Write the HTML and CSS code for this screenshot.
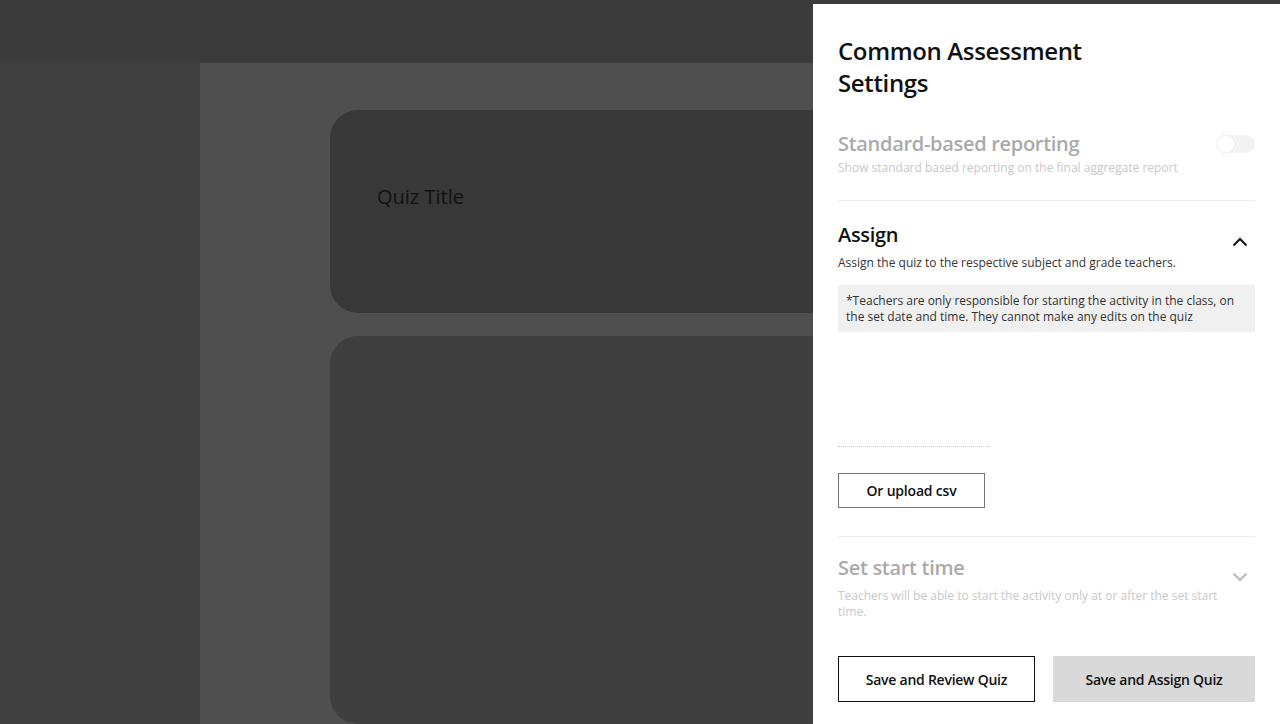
FILE: index.html
```html
<!DOCTYPE html>
<html lang="en">
<head>
    <meta charset="UTF-8">
    <meta name="viewport" content="width=device-width, initial-scale=1.0">
    <title>Common Assessment Settings</title>
    <link rel="stylesheet" href="styles.css">
</head>
<body>
    <div class="topbar"></div>
    <div class="layout">
        <div class="sidebar"></div>
        <div class="main">
            <div class="card card-title">
                <div class="quiz-title">Quiz Title</div>
            </div>
            <div class="card card-body"></div>
        </div>
    </div>

    <div class="drawer">
        <h1 class="drawer-title">Common Assessment Settings</h1>

        <div class="section section-disabled first">
            <div class="section-head">
                <div class="section-name">Standard-based reporting</div>
                <div class="toggle"><span class="knob"></span></div>
            </div>
            <div class="section-desc">Show standard based reporting on the final aggregate report</div>
        </div>

        <div class="section">
            <div class="section-head">
                <div class="section-name">Assign</div>
                <svg class="chevron" width="16" height="10" viewBox="0 0 16 10">
                    <path d="M1.5 8.5 L8 2 L14.5 8.5" fill="none" stroke="#111" stroke-width="2"/>
                </svg>
            </div>
            <div class="section-desc">Assign the quiz to the respective subject and grade teachers.</div>
            <div class="note">*Teachers are only responsible for starting the activity in the class, on the set date and time. They cannot make any edits on the quiz</div>
            <div class="picker"></div>
            <button class="upload-btn">Or upload csv</button>
        </div>

        <div class="section section-disabled last">
            <div class="section-head">
                <div class="section-name">Set start time</div>
                <svg class="chevron down" width="16" height="10" viewBox="0 0 16 10">
                    <path d="M1.5 1.5 L8 8 L14.5 1.5" fill="none" stroke="#bbb" stroke-width="2"/>
                </svg>
            </div>
            <div class="section-desc narrow">Teachers will be able to start the activity only at or after the set start time.</div>
        </div>

        <div class="actions">
            <button class="btn btn-outline">Save and Review Quiz</button>
            <button class="btn btn-fill">Save and Assign Quiz</button>
        </div>
    </div>
</body>
</html>
```

FILE: styles.css
```css
body {
    font-family: 'Open Sans', 'Noto Sans', sans-serif;
    margin: 0;
    padding: 0;
    background-color: #4f4f4f;
    height: 724px;
    overflow: hidden;
}
.topbar {
    height: 63px;
    background: #3b3b3b;
}
.layout {
    display: flex;
    height: 661px;
}
.sidebar {
    width: 200px;
    background: #404040;
}
.main {
    flex: 1;
    padding: 47px 0 0 130px;
    display: flex;
    flex-direction: column;
    gap: 23px;
}
.card {
    border-radius: 28px 0 0 28px;
}
.card-title {
    height: 203px;
    background: #383838;
    padding: 0 0 30px 47px;
    display: flex;
    align-items: center;
    box-sizing: border-box;
}
.quiz-title {
    font-size: 20px;
    color: #121212;
}
.card-body {
    flex: 1;
    background: #3f3f3f;
}

/* drawer sits over the page */
.drawer {
    position: fixed;
    top: 4px;
    right: 0;
    bottom: 0;
    width: 467px;
    background: #fff;
    box-sizing: border-box;
    padding: 31px 25px 0 25px;
    display: flex;
    flex-direction: column;
}
.drawer-title {
    margin: 0;
    font-size: 24px;
    line-height: 32px;
    font-weight: 600;
    letter-spacing: -0.35px;
    color: #111;
    width: 260px;
}
.section {
    border-bottom: 1px solid #ececec;
    padding: 20px 0 28px;
}
.section.first {
    padding-top: 31px;
    padding-bottom: 24px;
}
.section.last {
    border-bottom: none;
    padding-top: 17px;
    padding-bottom: 0;
}
.section-head {
    display: flex;
    justify-content: space-between;
    align-items: flex-start;
}
.section-name {
    font-size: 20px;
    line-height: 28px;
    font-weight: 600;
    letter-spacing: -0.3px;
    color: #111;
}
.section-desc {
    font-size: 12px;
    line-height: 16px;
    color: #333;
    margin-top: 6px;
}
.section-disabled .section-name {
    color: #aaa;
}
.section-disabled .section-desc {
    color: #c8c8c8;
    margin-top: 2px;
}
.section-desc.narrow {
    max-width: 385px;
    margin-top: 6px;
}
.chevron {
    margin-right: 7px;
    margin-top: 16px;
}
.chevron.down {
    margin-top: 18px;
}
.toggle {
    width: 38px;
    height: 18px;
    border-radius: 9px;
    background: #f3f3f3;
    position: relative;
    margin-top: 5px;
}
.knob {
    position: absolute;
    left: 0;
    top: 0;
    width: 18px;
    height: 18px;
    border-radius: 50%;
    background: #fff;
    box-shadow: 0 0 1px rgba(0, 0, 0, 0.25);
}
.note {
    margin-top: 14px;
    background: #f0f0f0;
    padding: 8px 8px 7px;
    font-size: 12px;
    line-height: 16px;
    color: #333;
}
.picker {
    width: 152px;
    height: 114px;
    border-bottom: 1px dotted #c8c8c8;
}
.upload-btn {
    margin-top: 26px;
    width: 147px;
    height: 35px;
    border: 1px solid #777;
    background: #fff;
    font-family: inherit;
    font-size: 14px;
    font-weight: 600;
    letter-spacing: -0.2px;
    color: #111;
    cursor: pointer;
}
.actions {
    display: flex;
    gap: 18px;
    margin-top: 36px;
}
.btn {
    height: 46px;
    font-family: inherit;
    font-size: 14px;
    font-weight: 600;
    letter-spacing: -0.25px;
    color: #111;
    cursor: pointer;
}
.btn-outline {
    width: 197px;
    background: #fff;
    border: 1px solid #111;
}
.btn-fill {
    flex: 1;
    background: #d9d9d9;
    border: none;
}
```
